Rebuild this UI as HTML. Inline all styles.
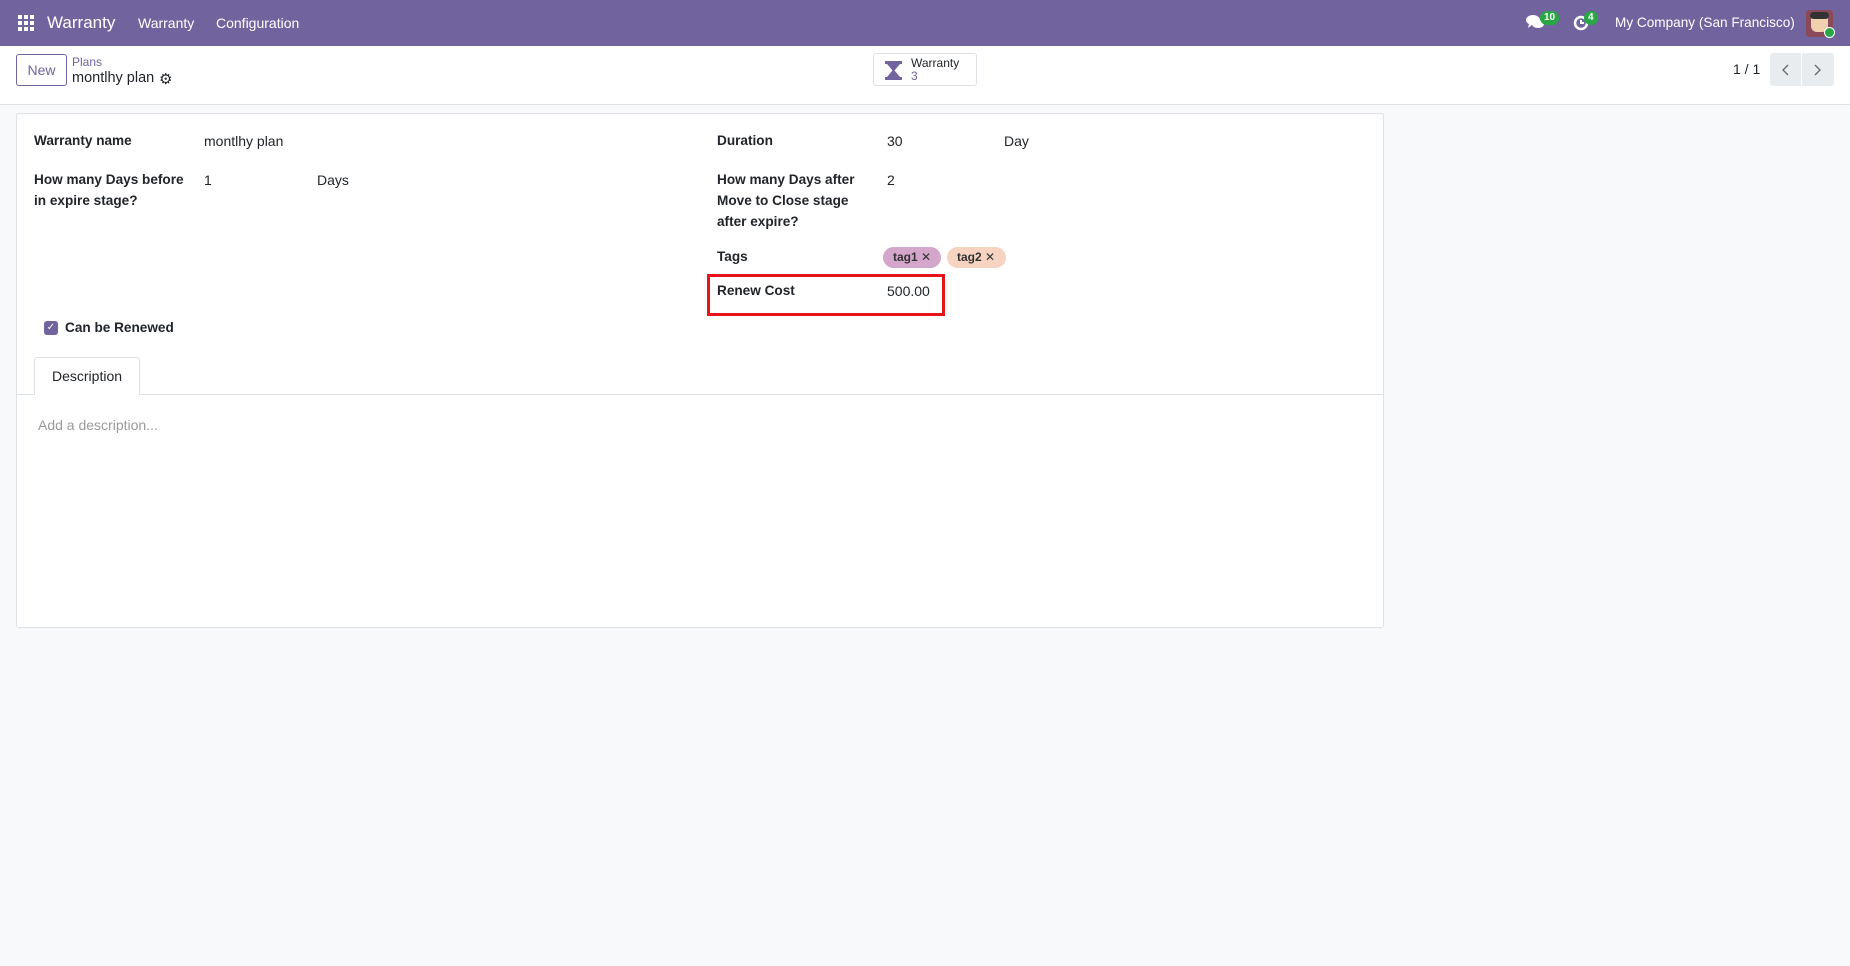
<!DOCTYPE html>
<html><head><meta charset="utf-8"><style>
*{box-sizing:border-box;margin:0;padding:0}
body{width:1850px;height:966px;background:#f8f9fa;font-family:"Liberation Sans",sans-serif;color:#212529;position:relative;overflow:hidden;font-size:14px}
.a{position:absolute;white-space:nowrap}
.nav{position:absolute;left:0;top:0;width:1850px;height:46px;background:#71639e;color:#fff}
.cp{position:absolute;left:0;top:46px;width:1850px;height:59px;background:#fff;border-bottom:1px solid #dee2e6}
.sheet{position:absolute;left:16px;top:113px;width:1368px;height:515px;background:#fff;border:1px solid #dee2e6;border-radius:3px}
.lb{font-weight:bold;font-size:13.6px;line-height:21px}
.badge{background:#28a745;color:#fff;font-size:10px;font-weight:bold;border-radius:8px;padding:1px 4px;line-height:12px}
</style></head><body>
<div class="nav">
 <svg class="a" style="left:18px;top:15px" width="16" height="16" viewBox="0 0 16 16" fill="#fff"><rect x="0" y="0" width="4" height="4"/><rect x="6" y="0" width="4" height="4"/><rect x="12" y="0" width="4" height="4"/><rect x="0" y="6" width="4" height="4"/><rect x="6" y="6" width="4" height="4"/><rect x="12" y="6" width="4" height="4"/><rect x="0" y="12" width="4" height="4"/><rect x="6" y="12" width="4" height="4"/><rect x="12" y="12" width="4" height="4"/></svg>
 <div class="a" style="left:47px;top:13px;font-size:17px">Warranty</div>
 <div class="a" style="left:138px;top:15px;font-size:14px">Warranty</div>
 <div class="a" style="left:216px;top:15px;font-size:14px">Configuration</div>
 <svg class="a" style="left:1526px;top:14px" width="18" height="17" viewBox="0 0 18 17" fill="#fff"><ellipse cx="7" cy="6" rx="7" ry="5"/><path d="M3 10 L2 14 L7 10Z"/><ellipse cx="12" cy="10" rx="6" ry="4"/></svg>
 <div class="a badge" style="left:1540px;top:11px">10</div>
 <svg class="a" style="left:1573px;top:14px" width="17" height="17" viewBox="0 0 17 17"><circle cx="8" cy="9" r="6" fill="none" stroke="#fff" stroke-width="2.5"/><path d="M8 6v3h3" stroke="#fff" stroke-width="2" fill="none"/></svg>
 <div class="a badge" style="left:1584px;top:11px">4</div>
 <div class="a" style="left:1615px;top:15px;font-size:13.6px">My Company (San Francisco)</div>
 <div class="a" style="left:1806px;top:10px;width:27px;height:27px;background:#8a4a5a;border-radius:3px"><div style="position:absolute;left:5px;top:4px;width:17px;height:18px;background:#f1d0b0;border-radius:6px"></div><div style="position:absolute;left:4px;top:2px;width:19px;height:7px;background:#333;border-radius:4px"></div></div>
 <div class="a" style="left:1824px;top:27px;width:11px;height:11px;background:#28a745;border-radius:50%;border:1px solid #fff"></div>
</div>
<div class="cp">
 <div class="a" style="left:16px;top:8px;width:51px;height:32px;border:1px solid #71639e;border-radius:3px;color:#71639e;font-size:14px;text-align:center;line-height:30px">New</div>
 <div class="a" style="left:72px;top:9px;font-size:12px;color:#71639e">Plans</div>
 <div class="a" style="left:72px;top:24px;font-size:14.5px">montlhy plan</div>
 <div class="a" style="left:159px;top:24px;font-size:15px">⚙</div>
 <div class="a" style="left:873px;top:7px;width:104px;height:33px;border:1px solid #dee2e6;border-radius:3px">
  <svg class="a" style="left:11px;top:7px" width="17" height="19" viewBox="0 0 17 19" fill="#71639e"><rect x="0" y="0" width="17" height="3"/><rect x="0" y="16" width="17" height="3"/><path d="M2 3h13L9.5 9.5 15 16H2l5.5-6.5z"/></svg>
  <div class="a" style="left:37px;top:3px;font-size:12px;line-height:13px">Warranty<br><span style="color:#71639e">3</span></div>
 </div>
 <div class="a" style="left:1733px;top:15px;font-size:14px">1 / 1</div>
 <div class="a" style="left:1770px;top:7px;width:31px;height:33px;background:#e9ecef;border-radius:3px 0 0 3px"><svg class="a" style="left:11px;top:11px" width="8" height="12" viewBox="0 0 8 12"><path d="M7 1L2 6l5 5" stroke="#666" stroke-width="1.3" fill="none"/></svg></div>
 <div class="a" style="left:1802px;top:7px;width:32px;height:33px;background:#e9ecef;border-radius:0 3px 3px 0"><svg class="a" style="left:12px;top:11px" width="8" height="12" viewBox="0 0 8 12"><path d="M1 1l5 5-5 5" stroke="#666" stroke-width="1.3" fill="none"/></svg></div>
</div>
<div class="sheet">
 <div class="a lb" style="left:17px;top:16px">Warranty name</div>
 <div class="a" style="left:187px;top:19px;font-size:14px">montlhy plan</div>
 <div class="a lb" style="left:17px;top:55px">How many Days before<br>in expire stage?</div>
 <div class="a" style="left:187px;top:58px">1</div>
 <div class="a" style="left:300px;top:58px">Days</div>
 <div class="a lb" style="left:700px;top:16px">Duration</div>
 <div class="a" style="left:870px;top:19px">30</div>
 <div class="a" style="left:987px;top:19px">Day</div>
 <div class="a lb" style="left:700px;top:55px">How many Days after<br>Move to Close stage<br>after expire?</div>
 <div class="a" style="left:870px;top:58px">2</div>
 <div class="a lb" style="left:700px;top:132px">Tags</div>
 <div class="a" style="left:866px;top:133px;width:58px;height:21px;padding-left:10px;background:#d5a6cc;border-radius:11px;font-size:12px;line-height:21px;font-weight:bold;color:#333">tag1 <span style="font-weight:normal">✕</span></div>
 <div class="a" style="left:930px;top:133px;width:59px;height:21px;padding-left:10px;background:#f6d4c1;border-radius:11px;font-size:12px;line-height:21px;font-weight:bold;color:#333">tag2 <span style="font-weight:normal">✕</span></div>
 <div class="a" style="left:690px;top:160px;width:238px;height:42px;border:3px solid #e8121b"></div>
 <div class="a lb" style="left:700px;top:166px">Renew Cost</div>
 <div class="a" style="left:870px;top:169px">500.00</div>
 <div class="a" style="left:27px;top:207px;width:14px;height:14px;background:#71639e;border-radius:3px;color:#fff;font-size:10px;text-align:center;line-height:14px">✓</div>
 <div class="a lb" style="left:48px;top:203px">Can be Renewed</div>
 <div class="a" style="left:0;top:280px;width:1366px;border-top:1px solid #dee2e6"></div>
 <div class="a" style="left:17px;top:243px;width:106px;height:38px;background:#fff;border:1px solid #dee2e6;border-bottom:none;border-radius:3px 3px 0 0;text-align:center;line-height:36px;font-size:14px">Description</div>
 <div class="a" style="left:21px;top:303px;color:#9a9a9a;font-size:14px">Add a description...</div>
</div>
</body></html>
